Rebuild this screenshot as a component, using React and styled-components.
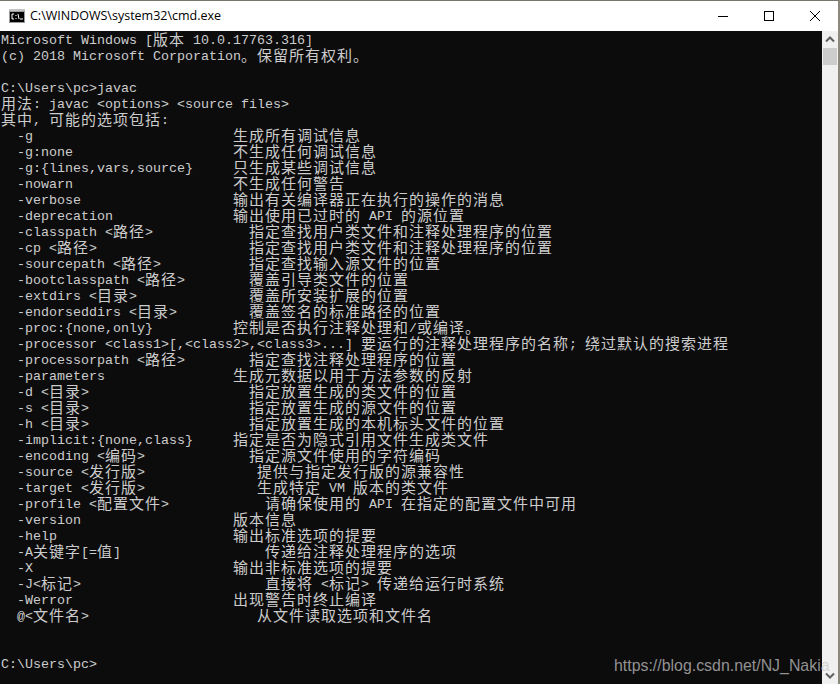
import React from 'react';
import styled, { createGlobalStyle } from 'styled-components';

const Global = createGlobalStyle`
  html, body { margin: 0; padding: 0; background: #0c0c0c; }
  #root { width: 840px; height: 684px; overflow: hidden; }
`;

const Window = styled.div`
  position: relative;
  box-sizing: border-box;
  width: 840px;
  height: 684px;
  display: flex;
  flex-direction: column;
  overflow: hidden;
  background: #fff;
  border-top: 1px solid #77756c;
  border-right: 2px solid #8b887c;
`;

const TitleBar = styled.header`
  flex: 0 0 30px;
  display: flex;
  align-items: center;
  background: #fff;
  padding-left: 9px;
`;

const AppIcon = styled.svg`
  flex: none;
  width: 16px;
  height: 16px;
  margin-right: 5px;
`;

const TitleText = styled.span`
  flex: 1;
  font: 12.5px/16px "Open Sans", "Liberation Sans", Arial, sans-serif;
  color: #000;
  white-space: pre;
`;

const Controls = styled.div`
  display: flex;
  height: 30px;
`;

const ControlButton = styled.div`
  width: 46px;
  height: 30px;
  display: flex;
  align-items: center;
  justify-content: center;
`;

const Body = styled.main`
  flex: 1;
  min-height: 0;
  display: flex;
`;

const Console = styled.pre`
  flex: 1;
  min-width: 0;
  margin: 0;
  padding: 2px 0 0 1px;
  background: #0c0c0c;
  color: #cccccc;
  font-family: "Liberation Mono", "Courier New", monospace;
  font-size: 13.34px;
  line-height: 16px;
  overflow: hidden;
`;

const Line = styled.div`
  height: 16px;
  display: flex;
  white-space: pre;
`;

const Option = styled.span`
  flex: none;
  width: ${p => p.$col * 8}px;
`;

const Han = styled.span`
  font-family: "Noto Sans CJK SC", "Noto Sans", sans-serif;
  font-size: 15px;
  letter-spacing: 1px;
  line-height: 0;
  vertical-align: -1px;
`;

const Scrollbar = styled.aside`
  flex: 0 0 16px;
  display: flex;
  flex-direction: column;
  background: #f0f0f0;
`;

const ScrollArrow = styled.div`
  flex: 0 0 17px;
  display: flex;
  align-items: center;
  justify-content: center;
`;

const ScrollThumb = styled.div`
  height: 17px;
  margin: 0 1px;
  background: #cdcdcd;
`;

const ScrollTrack = styled.div`
  flex: 1;
`;

const Watermark = styled.span`
  position: absolute;
  left: 614px;
  top: 655px;
  font: 15.9px/20px "Liberation Sans", Arial, sans-serif;
  color: rgba(200, 200, 200, 0.72);
  white-space: pre;
`;

const isHan = /([\u3000-\u303f\u4e00-\u9fff\uff00-\uffef]+)/;

const Text = ({ value }) =>
  value.split(isHan).map((part, i) =>
    i % 2 ? <Han key={i}>{part}</Han> : <React.Fragment key={i}>{part}</React.Fragment>
  );

const rows = [
  ['Microsoft Windows [版本 10.0.17763.316]'],
  ['(c) 2018 Microsoft Corporation。保留所有权利。'],
  [''],
  ['C:\\Users\\pc>javac'],
  ['用法: javac <options> <source files>'],
  ['其中, 可能的选项包括:'],
  ['  -g', 29, '生成所有调试信息'],
  ['  -g:none', 29, '不生成任何调试信息'],
  ['  -g:{lines,vars,source}', 29, '只生成某些调试信息'],
  ['  -nowarn', 29, '不生成任何警告'],
  ['  -verbose', 29, '输出有关编译器正在执行的操作的消息'],
  ['  -deprecation', 29, '输出使用已过时的 API 的源位置'],
  ['  -classpath <路径>', 31, '指定查找用户类文件和注释处理程序的位置'],
  ['  -cp <路径>', 31, '指定查找用户类文件和注释处理程序的位置'],
  ['  -sourcepath <路径>', 31, '指定查找输入源文件的位置'],
  ['  -bootclasspath <路径>', 31, '覆盖引导类文件的位置'],
  ['  -extdirs <目录>', 31, '覆盖所安装扩展的位置'],
  ['  -endorseddirs <目录>', 31, '覆盖签名的标准路径的位置'],
  ['  -proc:{none,only}', 29, '控制是否执行注释处理和/或编译。'],
  ['  -processor <class1>[,<class2>,<class3>...] 要运行的注释处理程序的名称; 绕过默认的搜索进程'],
  ['  -processorpath <路径>', 31, '指定查找注释处理程序的位置'],
  ['  -parameters', 29, '生成元数据以用于方法参数的反射'],
  ['  -d <目录>', 31, '指定放置生成的类文件的位置'],
  ['  -s <目录>', 31, '指定放置生成的源文件的位置'],
  ['  -h <目录>', 31, '指定放置生成的本机标头文件的位置'],
  ['  -implicit:{none,class}', 29, '指定是否为隐式引用文件生成类文件'],
  ['  -encoding <编码>', 31, '指定源文件使用的字符编码'],
  ['  -source <发行版>', 32, '提供与指定发行版的源兼容性'],
  ['  -target <发行版>', 32, '生成特定 VM 版本的类文件'],
  ['  -profile <配置文件>', 33, '请确保使用的 API 在指定的配置文件中可用'],
  ['  -version', 29, '版本信息'],
  ['  -help', 29, '输出标准选项的提要'],
  ['  -A关键字[=值]', 33, '传递给注释处理程序的选项'],
  ['  -X', 29, '输出非标准选项的提要'],
  ['  -J<标记>', 33, '直接将 <标记> 传递给运行时系统'],
  ['  -Werror', 29, '出现警告时终止编译'],
  ['  @<文件名>', 32, '从文件读取选项和文件名'],
  [''],
  [''],
  ['C:\\Users\\pc>'],
];

export default function App() {
  return (
    <>
      <Global />
      <Window>
        <TitleBar>
          <AppIcon viewBox="0 0 16 16">
            <rect x="0" y="1" width="16" height="14" fill="#9a9a9a" />
            <rect x="0" y="1" width="16" height="2" fill="#c4c4c4" />
            <rect x="1" y="4" width="14" height="10" fill="#000" />
            <path d="M5 6H3v5h2M7 7v1M7 10v1M9 6l1 5M11 11h3" stroke="#fff" strokeWidth="1" fill="none" />
          </AppIcon>
          <TitleText>C:\WINDOWS\system32\cmd.exe</TitleText>
          <Controls>
            <ControlButton>
              <svg width="10" height="10" viewBox="0 0 10 10"><path d="M0 5.5H10" stroke="#000" /></svg>
            </ControlButton>
            <ControlButton>
              <svg width="10" height="10" viewBox="0 0 10 10"><rect x=".5" y=".5" width="9" height="9" fill="none" stroke="#000" /></svg>
            </ControlButton>
            <ControlButton>
              <svg width="10" height="10" viewBox="0 0 10 10"><path d="M0 0L10 10M10 0L0 10" stroke="#000" /></svg>
            </ControlButton>
          </Controls>
        </TitleBar>
        <Body>
          <Console>
            {rows.map(([left, col, desc], i) => (
              <Line key={i}>
                {col ? (
                  <>
                    <Option $col={col}><Text value={left} /></Option>
                    <span><Text value={desc} /></span>
                  </>
                ) : (
                  <span><Text value={left} /></span>
                )}
              </Line>
            ))}
          </Console>
          <Scrollbar>
            <ScrollArrow>
              <svg width="10" height="7" viewBox="0 0 10 7"><path d="M1 5.5L5 1.5L9 5.5" fill="none" stroke="#606060" strokeWidth="2" /></svg>
            </ScrollArrow>
            <ScrollThumb />
            <ScrollTrack />
            <ScrollArrow>
              <svg width="10" height="7" viewBox="0 0 10 7"><path d="M1 1.5L5 5.5L9 1.5" fill="none" stroke="#606060" strokeWidth="2" /></svg>
            </ScrollArrow>
          </Scrollbar>
        </Body>
        <Watermark>https://blog.csdn.net/NJ_Nakia</Watermark>
      </Window>
    </>
  );
}
